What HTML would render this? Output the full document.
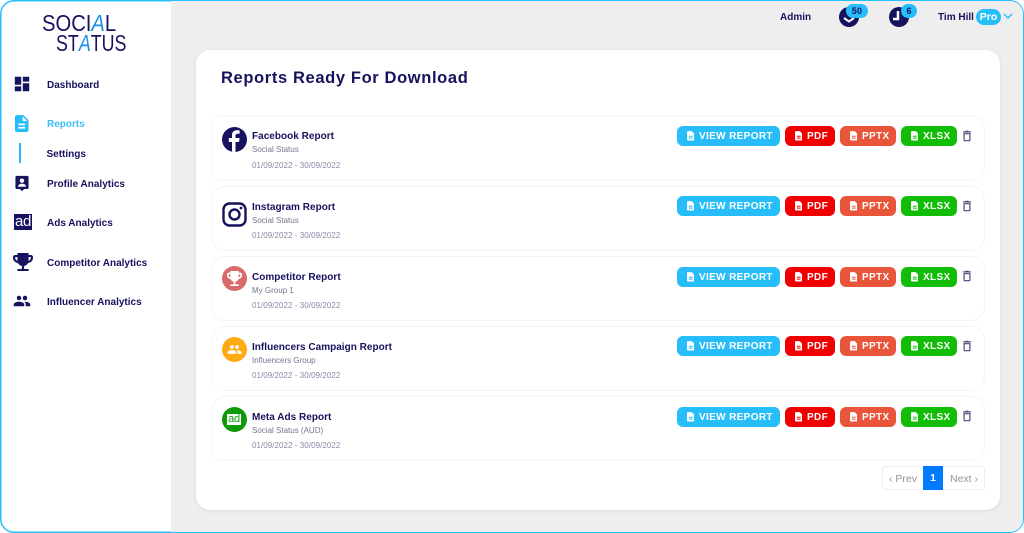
<!DOCTYPE html>
<html><head><meta charset="utf-8">
<style>
*{box-sizing:border-box}
html,body{margin:0;padding:0;background:#fff}
body{width:1024px;height:533px;overflow:hidden;position:relative;font-family:"Liberation Sans",sans-serif;color:#17125e}
.a{position:absolute;white-space:nowrap}
#frame{position:absolute;left:0;top:0;width:1024px;height:533px;border-radius:14px;border:1.5px solid #27c0fb;background:#eee;overflow:hidden}
#side{position:absolute;left:0;top:0;width:171px;height:533px;background:#fff}
#main{position:absolute;left:196px;top:50px;width:804px;height:460px;background:#fff;border-radius:14px;box-shadow:0 1px 4px rgba(0,0,0,.08)}
.nav{font-size:10px;font-weight:700;letter-spacing:0;left:47px;margin-top:1px}
.row{position:absolute;left:211px;width:774px;height:66px;border:1px solid #f5f5f7;border-radius:14px;background:#fff}
.t{left:252px;font-size:10px;font-weight:700;letter-spacing:.02px;margin-top:1px}
.s{left:252px;font-size:8px;color:#77748f;letter-spacing:0}
.d{left:252px;font-size:8px;color:#8a88a6;letter-spacing:.05px}
.b{position:absolute;height:20px;border-radius:6px;color:#fff;font-size:10px;font-weight:700;letter-spacing:.35px;line-height:22px;white-space:nowrap}
.b svg{position:absolute;left:9.5px;top:5px;width:7.5px;height:9.5px;fill:#fff}
.b span{position:absolute;top:0}
.ic{position:absolute;left:222px;width:25px;height:25px;border-radius:50%}
.logo{font-size:23.5px;line-height:26px;transform-origin:0 0}
</style></head><body>
<div id="frame"></div>
<div id="side"></div>
<svg class="a" style="left:0;top:0" width="171" height="533"><path d="M171 .75H14A13.25 13.25 0 0 0 .75 14V519A13.25 13.25 0 0 0 14 532.25H171" fill="none" stroke="#27c0fb" stroke-width="1.5"/></svg>
<div class="a logo" style="left:42px;top:10px;transform:scaleX(.86)">SOCI<span style="color:#1b8fe8;font-style:italic">A</span>L</div>
<div class="a logo" style="left:56px;top:30px;transform:scaleX(.76)">ST<span style="color:#1b8fe8;font-style:italic">A</span>TUS</div>

<svg class="a" style="left:14px;top:76px" width="16" height="16" viewBox="2 2 20 20" fill="#17125e"><path d="M3 13h8V3H3v10zm0 8h8v-6H3v6zm10 0h8V11h-8v10zm0-18v6h8V3h-8z"/></svg>
<div class="a nav" style="top:79px">Dashboard</div>
<svg class="a" style="left:15px;top:115px" width="13.500" height="17" viewBox="4 2 16 20" fill="#27bdf9"><path d="M14 2H6c-1.100 0-2 .9-2 2v16c0 1.100.9 2 2 2h12c1.100 0 2-.9 2-2V8l-6-6zm2 16H8v-2h8v2zm0-4H8v-2h8v2zm-3-5V3.500L18.500 9H13z"/></svg>
<div class="a nav" style="top:118px;color:#3cc0f8">Reports</div>
<div class="a" style="left:19px;top:143px;width:2px;height:20px;background:#27bdf9"></div>
<div class="a nav" style="left:46.500px;top:148px">Settings</div>
<svg class="a" style="left:15px;top:175px" width="14" height="16.500" viewBox="0 0 16 18"><path d="M2 .5h12a1.500 1.500 0 0 1 1.500 1.500v12a1.500 1.500 0 0 1-1.500 1.500h-3.500L8 18l-2.500-2.500H2A1.500 1.500 0 0 1 .5 14V2A1.500 1.500 0 0 1 2 .5z" fill="#17125e"/><circle cx="8" cy="6" r="2.500" fill="#fff"/><path d="M3.500 13c0-2.500 2-3.500 4.500-3.500s4.500 1 4.500 3.500z" fill="#fff"/></svg>
<div class="a nav" style="top:178px">Profile Analytics</div>
<div class="a" style="left:14px;top:214px;width:18px;height:16px;background:#17125e;color:#fff;font-size:15px;line-height:16px;text-align:center;letter-spacing:-.4px">ad</div>
<div class="a nav" style="top:217px">Ads Analytics</div>
<svg class="a" style="left:13px;top:253px" width="20" height="18" viewBox="3 3 18 18" preserveAspectRatio="none" fill="#17125e"><path d="M19 5h-2V3H7v2H5c-1.100 0-2 .9-2 2v1c0 2.550 1.920 4.630 4.390 4.940.63 1.500 1.980 2.630 3.610 2.960V19H7v2h10v-2h-4v-3.100c1.630-.33 2.980-1.460 3.610-2.960C19.080 12.630 21 10.550 21 8V7c0-1.100-.9-2-2-2zM5 8V7h2v3.820C5.840 10.400 5 9.300 5 8zm14 0c0 1.300-.84 2.400-2 2.820V7h2v1z"/></svg>
<div class="a nav" style="top:257px">Competitor Analytics</div>
<svg class="a" style="left:12.700px;top:292.200px" width="18" height="18" viewBox="0 0 24 24" fill="#17125e"><path d="M16 11c1.660 0 2.990-1.340 2.990-3S17.660 5 16 5c-1.660 0-3 1.340-3 3s1.340 3 3 3zm-8 0c1.660 0 2.990-1.340 2.990-3S9.660 5 8 5C6.340 5 5 6.340 5 8s1.340 3 3 3zm0 2c-2.330 0-7 1.170-7 3.500V19h14v-2.500c0-2.330-4.670-3.500-7-3.500zm8 0c-.29 0-.62.02-.97.05 1.160.84 1.970 1.970 1.970 3.450V19h6v-2.500c0-2.330-4.670-3.500-7-3.500z"/></svg>
<div class="a nav" style="top:296px">Influencer Analytics</div>

<div class="a" style="left:780px;top:11.500px;font-size:10px;font-weight:700">Admin</div>
<div class="a" style="left:839px;top:7px;width:20px;height:20px;border-radius:50%;background:#17125e"></div>
<svg class="a" style="left:839px;top:7px" width="20" height="20"><path d="M5 11l5 3.500 5-3.500" fill="none" stroke="#fff" stroke-width="2"/></svg>
<div class="a" style="left:846px;top:4px;width:22px;height:14px;border-radius:7px;background:#27bdf9;font-size:9px;font-weight:700;text-align:center;line-height:14px;letter-spacing:.3px">50</div>
<div class="a" style="left:889px;top:7px;width:20px;height:20px;border-radius:50%;background:#17125e"></div>
<svg class="a" style="left:889px;top:6px" width="21" height="21"><path d="M9 5v8H4" fill="none" stroke="#fff" stroke-width="2.500"/></svg>
<div class="a" style="left:901px;top:4px;width:16px;height:14px;border-radius:7px;background:#27bdf9;font-size:9px;font-weight:700;text-align:center;line-height:14px">6</div>
<div class="a" style="left:938px;top:11.500px;font-size:10px;font-weight:700">Tim Hill</div>
<div class="a" style="left:976px;top:9px;width:25px;height:16px;border-radius:8px;background:#27bdf9;color:#fff;font-size:10.500px;font-weight:700;text-align:center;line-height:17px">Pro</div>
<svg class="a" style="left:1003px;top:13px" width="10" height="7"><path d="M1 1l4 4 4-4" fill="none" stroke="#27bdf9" stroke-width="1.500"/></svg>

<div id="main"></div>
<div class="a" style="left:221px;top:69px;font-size:16.500px;font-weight:700;letter-spacing:.63px">Reports Ready For Download</div>

<div class="row" style="top:115px"></div>
<div class="row" style="top:186px;height:65px"></div>
<div class="row" style="top:256px;height:65px"></div>
<div class="row" style="top:326px;height:65px"></div>
<div class="row" style="top:396px;height:65px"></div>

<div class="ic" style="top:127px;background:#17125e;overflow:hidden"><svg width="25" height="25"><path d="M13.500 25V15h3.500l.6-4h-4.100V8.800c0-1.200.5-2 2.100-2h2V3.400c-.5-.1-1.600-.2-2.800-.2-2.900 0-4.800 1.700-4.800 4.900V11H6.800v4H10v10z" fill="#fff"/></svg></div>
<div class="a t" style="top:130px">Facebook Report</div>
<div class="a s" style="top:145px">Social Status</div>
<div class="a d" style="top:161px">01/09/2022 - 30/09/2022</div>

<svg class="a" style="left:222px;top:202px" width="25" height="25"><rect x="1.500" y="1.500" width="22" height="22" rx="6" fill="none" stroke="#17125e" stroke-width="2.400"/><circle cx="12.500" cy="12.500" r="5" fill="none" stroke="#17125e" stroke-width="2.400"/><circle cx="19" cy="6" r="1.400" fill="#17125e"/></svg>
<div class="a t" style="top:201px">Instagram Report</div>
<div class="a s" style="top:216px">Social Status</div>
<div class="a d" style="top:231px">01/09/2022 - 30/09/2022</div>

<div class="ic" style="top:266px;background:#d96a6a"></div>
<svg class="a" style="left:227px;top:271px" width="15" height="15" viewBox="3 3 18 18" fill="#fff"><path d="M19 5h-2V3H7v2H5c-1.100 0-2 .9-2 2v1c0 2.550 1.920 4.630 4.390 4.940.63 1.500 1.980 2.630 3.610 2.960V19H7v2h10v-2h-4v-3.100c1.630-.33 2.980-1.460 3.610-2.960C19.080 12.630 21 10.550 21 8V7c0-1.100-.9-2-2-2zM5 8V7h2v3.820C5.840 10.400 5 9.300 5 8zm14 0c0 1.300-.84 2.400-2 2.820V7h2v1z"/></svg>
<div class="a t" style="top:271px">Competitor Report</div>
<div class="a s" style="top:286px">My Group 1</div>
<div class="a d" style="top:301px">01/09/2022 - 30/09/2022</div>

<div class="ic" style="top:337px;background:#fdab14"></div>
<svg class="a" style="left:227px;top:342px" width="15" height="15" viewBox="0 0 24 24" fill="#fff"><path d="M16 11c1.660 0 2.990-1.340 2.990-3S17.660 5 16 5c-1.660 0-3 1.340-3 3s1.340 3 3 3zm-8 0c1.660 0 2.990-1.340 2.990-3S9.660 5 8 5C6.340 5 5 6.340 5 8s1.340 3 3 3zm0 2c-2.330 0-7 1.170-7 3.500V19h14v-2.500c0-2.330-4.670-3.500-7-3.500zm8 0c-.29 0-.62.02-.97.05 1.160.84 1.970 1.970 1.970 3.450V19h6v-2.500c0-2.330-4.670-3.500-7-3.500z"/></svg>
<div class="a t" style="top:341px">Influencers Campaign Report</div>
<div class="a s" style="top:356px">Influencers Group</div>
<div class="a d" style="top:371px">01/09/2022 - 30/09/2022</div>

<div class="ic" style="top:407px;background:#0d9a06"></div>
<div class="a" style="left:227px;top:414px;width:14px;height:11px;background:#fff;color:#0d9a06;font-size:11px;line-height:11px;text-align:center;letter-spacing:-.2px">ad</div>
<div class="a t" style="top:411px">Meta Ads Report</div>
<div class="a s" style="top:426px">Social Status (AUD)</div>
<div class="a d" style="top:441px">01/09/2022 - 30/09/2022</div>

<div class="b" style="left:677px;top:126px;width:103px;background:#27bdf9"><svg viewBox="4 2 16 20"><path d="M14 2H6c-1.100 0-2 .9-2 2v16c0 1.100.9 2 2 2h12c1.100 0 2-.9 2-2V8l-6-6zm2 16H8v-2h8v2zm0-4H8v-2h8v2z"/></svg><span style="left:22px">VIEW REPORT</span></div>
<div class="b" style="left:785px;top:126px;width:50px;background:#f00000"><svg viewBox="4 2 16 20"><path d="M14 2H6c-1.100 0-2 .9-2 2v16c0 1.100.9 2 2 2h12c1.100 0 2-.9 2-2V8l-6-6zm2 16H8v-2h8v2zm0-4H8v-2h8v2z"/></svg><span style="left:22px">PDF</span></div>
<div class="b" style="left:840px;top:126px;width:56px;background:#e8553a"><svg viewBox="4 2 16 20"><path d="M14 2H6c-1.100 0-2 .9-2 2v16c0 1.100.9 2 2 2h12c1.100 0 2-.9 2-2V8l-6-6zm2 16H8v-2h8v2zm0-4H8v-2h8v2z"/></svg><span style="left:22px">PPTX</span></div>
<div class="b" style="left:901px;top:126px;width:56px;background:#11bd07"><svg viewBox="4 2 16 20"><path d="M14 2H6c-1.100 0-2 .9-2 2v16c0 1.100.9 2 2 2h12c1.100 0 2-.9 2-2V8l-6-6zm2 16H8v-2h8v2zm0-4H8v-2h8v2z"/></svg><span style="left:22px">XLSX</span></div>
<svg class="a" style="left:960px;top:129px" width="14" height="14" viewBox="0 0 24 24" fill="#4a4678"><path d="M6 19c0 1.100.9 2 2 2h8c1.100 0 2-.9 2-2V7H6v12zM8 9h8v10H8V9zm7.500-5l-1-1h-5l-1 1H5v2h14V4z"/></svg>

<div class="b" style="left:677px;top:196px;width:103px;background:#27bdf9"><svg viewBox="4 2 16 20"><path d="M14 2H6c-1.100 0-2 .9-2 2v16c0 1.100.9 2 2 2h12c1.100 0 2-.9 2-2V8l-6-6zm2 16H8v-2h8v2zm0-4H8v-2h8v2z"/></svg><span style="left:22px">VIEW REPORT</span></div>
<div class="b" style="left:785px;top:196px;width:50px;background:#f00000"><svg viewBox="4 2 16 20"><path d="M14 2H6c-1.100 0-2 .9-2 2v16c0 1.100.9 2 2 2h12c1.100 0 2-.9 2-2V8l-6-6zm2 16H8v-2h8v2zm0-4H8v-2h8v2z"/></svg><span style="left:22px">PDF</span></div>
<div class="b" style="left:840px;top:196px;width:56px;background:#e8553a"><svg viewBox="4 2 16 20"><path d="M14 2H6c-1.100 0-2 .9-2 2v16c0 1.100.9 2 2 2h12c1.100 0 2-.9 2-2V8l-6-6zm2 16H8v-2h8v2zm0-4H8v-2h8v2z"/></svg><span style="left:22px">PPTX</span></div>
<div class="b" style="left:901px;top:196px;width:56px;background:#11bd07"><svg viewBox="4 2 16 20"><path d="M14 2H6c-1.100 0-2 .9-2 2v16c0 1.100.9 2 2 2h12c1.100 0 2-.9 2-2V8l-6-6zm2 16H8v-2h8v2zm0-4H8v-2h8v2z"/></svg><span style="left:22px">XLSX</span></div>
<svg class="a" style="left:960px;top:199px" width="14" height="14" viewBox="0 0 24 24" fill="#4a4678"><path d="M6 19c0 1.100.9 2 2 2h8c1.100 0 2-.9 2-2V7H6v12zM8 9h8v10H8V9zm7.500-5l-1-1h-5l-1 1H5v2h14V4z"/></svg>

<div class="b" style="left:677px;top:267px;width:103px;background:#27bdf9"><svg viewBox="4 2 16 20"><path d="M14 2H6c-1.100 0-2 .9-2 2v16c0 1.100.9 2 2 2h12c1.100 0 2-.9 2-2V8l-6-6zm2 16H8v-2h8v2zm0-4H8v-2h8v2z"/></svg><span style="left:22px">VIEW REPORT</span></div>
<div class="b" style="left:785px;top:267px;width:50px;background:#f00000"><svg viewBox="4 2 16 20"><path d="M14 2H6c-1.100 0-2 .9-2 2v16c0 1.100.9 2 2 2h12c1.100 0 2-.9 2-2V8l-6-6zm2 16H8v-2h8v2zm0-4H8v-2h8v2z"/></svg><span style="left:22px">PDF</span></div>
<div class="b" style="left:840px;top:267px;width:56px;background:#e8553a"><svg viewBox="4 2 16 20"><path d="M14 2H6c-1.100 0-2 .9-2 2v16c0 1.100.9 2 2 2h12c1.100 0 2-.9 2-2V8l-6-6zm2 16H8v-2h8v2zm0-4H8v-2h8v2z"/></svg><span style="left:22px">PPTX</span></div>
<div class="b" style="left:901px;top:267px;width:56px;background:#11bd07"><svg viewBox="4 2 16 20"><path d="M14 2H6c-1.100 0-2 .9-2 2v16c0 1.100.9 2 2 2h12c1.100 0 2-.9 2-2V8l-6-6zm2 16H8v-2h8v2zm0-4H8v-2h8v2z"/></svg><span style="left:22px">XLSX</span></div>
<svg class="a" style="left:960px;top:269px" width="14" height="14" viewBox="0 0 24 24" fill="#4a4678"><path d="M6 19c0 1.100.9 2 2 2h8c1.100 0 2-.9 2-2V7H6v12zM8 9h8v10H8V9zm7.500-5l-1-1h-5l-1 1H5v2h14V4z"/></svg>

<div class="b" style="left:677px;top:336px;width:103px;background:#27bdf9"><svg viewBox="4 2 16 20"><path d="M14 2H6c-1.100 0-2 .9-2 2v16c0 1.100.9 2 2 2h12c1.100 0 2-.9 2-2V8l-6-6zm2 16H8v-2h8v2zm0-4H8v-2h8v2z"/></svg><span style="left:22px">VIEW REPORT</span></div>
<div class="b" style="left:785px;top:336px;width:50px;background:#f00000"><svg viewBox="4 2 16 20"><path d="M14 2H6c-1.100 0-2 .9-2 2v16c0 1.100.9 2 2 2h12c1.100 0 2-.9 2-2V8l-6-6zm2 16H8v-2h8v2zm0-4H8v-2h8v2z"/></svg><span style="left:22px">PDF</span></div>
<div class="b" style="left:840px;top:336px;width:56px;background:#e8553a"><svg viewBox="4 2 16 20"><path d="M14 2H6c-1.100 0-2 .9-2 2v16c0 1.100.9 2 2 2h12c1.100 0 2-.9 2-2V8l-6-6zm2 16H8v-2h8v2zm0-4H8v-2h8v2z"/></svg><span style="left:22px">PPTX</span></div>
<div class="b" style="left:901px;top:336px;width:56px;background:#11bd07"><svg viewBox="4 2 16 20"><path d="M14 2H6c-1.100 0-2 .9-2 2v16c0 1.100.9 2 2 2h12c1.100 0 2-.9 2-2V8l-6-6zm2 16H8v-2h8v2zm0-4H8v-2h8v2z"/></svg><span style="left:22px">XLSX</span></div>
<svg class="a" style="left:960px;top:339px" width="14" height="14" viewBox="0 0 24 24" fill="#4a4678"><path d="M6 19c0 1.100.9 2 2 2h8c1.100 0 2-.9 2-2V7H6v12zM8 9h8v10H8V9zm7.500-5l-1-1h-5l-1 1H5v2h14V4z"/></svg>

<div class="b" style="left:677px;top:407px;width:103px;background:#27bdf9"><svg viewBox="4 2 16 20"><path d="M14 2H6c-1.100 0-2 .9-2 2v16c0 1.100.9 2 2 2h12c1.100 0 2-.9 2-2V8l-6-6zm2 16H8v-2h8v2zm0-4H8v-2h8v2z"/></svg><span style="left:22px">VIEW REPORT</span></div>
<div class="b" style="left:785px;top:407px;width:50px;background:#f00000"><svg viewBox="4 2 16 20"><path d="M14 2H6c-1.100 0-2 .9-2 2v16c0 1.100.9 2 2 2h12c1.100 0 2-.9 2-2V8l-6-6zm2 16H8v-2h8v2zm0-4H8v-2h8v2z"/></svg><span style="left:22px">PDF</span></div>
<div class="b" style="left:840px;top:407px;width:56px;background:#e8553a"><svg viewBox="4 2 16 20"><path d="M14 2H6c-1.100 0-2 .9-2 2v16c0 1.100.9 2 2 2h12c1.100 0 2-.9 2-2V8l-6-6zm2 16H8v-2h8v2zm0-4H8v-2h8v2z"/></svg><span style="left:22px">PPTX</span></div>
<div class="b" style="left:901px;top:407px;width:56px;background:#11bd07"><svg viewBox="4 2 16 20"><path d="M14 2H6c-1.100 0-2 .9-2 2v16c0 1.100.9 2 2 2h12c1.100 0 2-.9 2-2V8l-6-6zm2 16H8v-2h8v2zm0-4H8v-2h8v2z"/></svg><span style="left:22px">XLSX</span></div>
<svg class="a" style="left:960px;top:409px" width="14" height="14" viewBox="0 0 24 24" fill="#4a4678"><path d="M6 19c0 1.100.9 2 2 2h8c1.100 0 2-.9 2-2V7H6v12zM8 9h8v10H8V9zm7.500-5l-1-1h-5l-1 1H5v2h14V4z"/></svg>

<div class="a" style="left:882px;top:466px;width:103px;height:24px;border:1px solid #eeeef2;border-radius:3px"></div>
<div class="a" style="left:889px;top:473px;font-size:10.500px;color:#95939f">‹ Prev</div>
<div class="a" style="left:923px;top:466px;width:20px;height:24px;background:#007bff;color:#fff;font-size:10.500px;font-weight:700;text-align:center;line-height:24px">1</div>
<div class="a" style="left:950px;top:473px;font-size:10.500px;color:#95939f">Next ›</div>
</body></html>
